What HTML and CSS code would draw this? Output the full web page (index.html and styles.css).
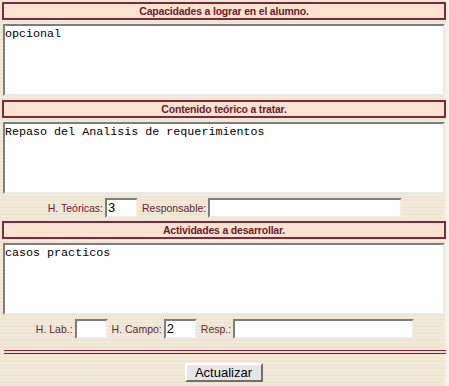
FILE: index.html
```html
<!DOCTYPE html>
<html lang="es">
<head>
<meta charset="utf-8">
<title>Contenido</title>
<link rel="stylesheet" href="styles.css">
</head>
<body>
<form class="page">
  <div class="head">Capacidades a lograr en el alumno.</div>
  <textarea class="area">opcional</textarea>
  <div class="head">Contenido teórico a tratar.</div>
  <textarea class="area">Repaso del Analisis de requerimientos</textarea>
  <div class="row">
    <label class="lbl">H. Teóricas:</label>
    <input class="field small" type="text" value="3">
    <label class="lbl">Responsable:</label>
    <input class="field resp1" type="text" value="">
  </div>
  <div class="head">Actividades a desarrollar.</div>
  <textarea class="area">casos practicos</textarea>
  <div class="row">
    <label class="lbl">H. Lab.:</label>
    <input class="field small" type="text" value="">
    <label class="lbl">H. Campo:</label>
    <input class="field small" type="text" value="2">
    <label class="lbl">Resp.:</label>
    <input class="field resp2" type="text" value="">
  </div>
  <div class="rule"></div>
  <div class="actions">
    <button class="btn" type="button">Actualizar</button>
  </div>
</form>
</body>
</html>
```
FILE: styles.css
```css
html, body {
  margin: 0;
  padding: 0;
}
body {
  width: 449px;
  height: 386px;
  overflow: hidden;
  font-family: "Liberation Sans", Arial, sans-serif;
  background:
    linear-gradient(to right, transparent 0 445px, #f7f1e6 445px 449px),
    repeating-linear-gradient(to bottom, #efe5d2 0 2px, #f3ebdc 2px 3px, #ede3cf 3px 5px, #f2e9d9 5px 7px);
}
.page {
  display: flex;
  flex-direction: column;
  width: 444px;
  padding: 2px 0 0 2px;
  box-sizing: content-box;
}
.head {
  height: 14px;
  line-height: 14px;
  border: 2px solid #7a2a3d;
  background: #fde2cf;
  color: #6e1a2e;
  font-weight: bold;
  font-size: 10.5px;
  letter-spacing: -0.2px;
  text-align: center;
}
.area {
  display: block;
  box-sizing: border-box;
  width: 442px;
  height: 72px;
  margin: 4px 0 4px 1px;
  padding: 1px 1px 1px 0;
  border: 2px solid;
  border-color: #7d7d7d #e9e9e9 #e9e9e9 #7d7d7d;
  background: #fff;
  font-family: "Liberation Mono", "Courier New", monospace;
  font-size: 11.7px;
  line-height: 14px;
  color: #000;
  resize: none;
  overflow: hidden;
}
.row {
  display: flex;
  justify-content: center;
  align-items: center;
  height: 27px;
  margin-top: -4px;
  gap: 2px;
}
.lbl {
  font-size: 10.5px;
  color: #6b1f30;
  margin-left: 2px;
}
.field {
  box-sizing: border-box;
  height: 20px;
  margin: 0;
  padding: 0 1px;
  border: 2px solid;
  border-color: #7d7d7d #ececec #ececec #7d7d7d;
  background: #fff;
  font-family: "Liberation Sans", Arial, sans-serif;
  font-size: 13px;
  color: #000;
}
.small { width: 33px; }
.resp1 { width: 194px; }
.resp2 { width: 181px; }
.rule {
  height: 2px;
  margin: 8px 0 0 2px;
  border-top: 1px solid #7a2a3d;
  border-bottom: 1px solid #7a2a3d;
  background: #f8d6d0;
}
.actions {
  display: flex;
  justify-content: center;
  padding-top: 9px;
  padding-right: 1px;
}
.btn {
  box-sizing: border-box;
  width: 78px;
  height: 19px;
  padding: 0;
  border: 2px solid;
  border-color: #ffffff #6f6f6f #6f6f6f #ffffff;
  background: #e6e6e8;
  font-family: "Liberation Sans", Arial, sans-serif;
  font-size: 13px;
  color: #000;
}
```
